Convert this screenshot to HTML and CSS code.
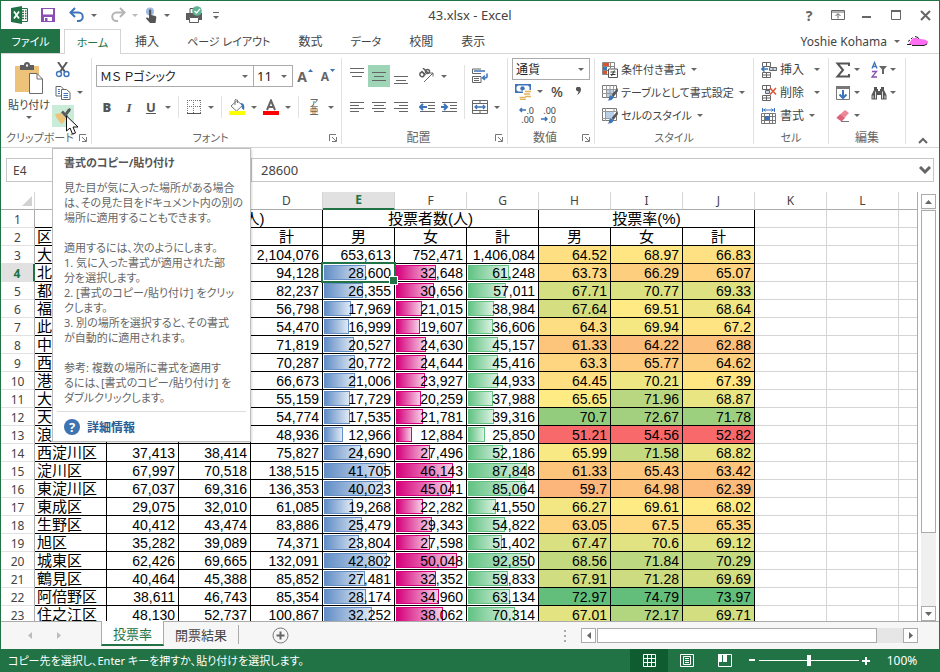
FILE: index.html
```html
<!DOCTYPE html>
<html lang="ja">
<head>
<meta charset="utf-8">
<title>43.xlsx - Excel</title>
<link rel="stylesheet" href="styles.css">
</head>
<body>
<div class="window">

<header class="titlebar">
  <div class="quick">
    <svg class="logo" width="18" height="18" viewBox="0 0 18 18"><path d="M10 2.500h6.500v13H10" fill="#fff" stroke="#217346"/><path d="M11 5h2M14 5h1.500M11 7.500h2M14 7.500h1.500M11 10h2M14 10h1.500M11 12.500h2M14 12.500h1.500" stroke="#217346" stroke-width="1.500"/><path d="M0 2 11 0v18L0 16z" fill="#217346"/><path d="m3 5.500 5 7M8 5.500l-5 7" stroke="#fff" stroke-width="1.800"/></svg>
    <button class="qa" aria-label="上書き保存"><svg width="16" height="16" viewBox="0 0 16 16"><path d="M1 1h14v14H1z" fill="#8a4fb5"/><path d="M3 2h10v5.500H3z" fill="#fff"/><path d="M4 10h8v4H4z" fill="#fff"/><path d="M5 11h2.500v3H5z" fill="#8a4fb5"/></svg></button>
    <button class="qa" aria-label="元に戻す"><svg width="16" height="16" viewBox="0 0 16 16"><path d="M2 5.500h7.500a4 4 0 0 1 0 8.500H8" fill="none" stroke="#3c73b9" stroke-width="2"/><path d="M6 1 1.500 5.500 6 10" fill="none" stroke="#3c73b9" stroke-width="2"/></svg><i class="dd"></i></button>
    <button class="qa" aria-label="やり直し"><svg width="16" height="16" viewBox="0 0 16 16"><path d="M14 5.500H6.500a4 4 0 0 0 0 8.500H8" fill="none" stroke="#b4b4b4" stroke-width="2"/><path d="m10 1 4.500 4.500L10 10" fill="none" stroke="#b4b4b4" stroke-width="2"/></svg><i class="dd pale"></i></button>
    <button class="qa touch" aria-label="タッチ/マウス モードの切り替え"><svg width="12" height="16" viewBox="1 0 12 16"><circle cx="6" cy="4.500" r="4" fill="#9dbbe0"/><path d="M5 3.500a1 1 0 0 1 2.200 0V8l4.300 1q1 .5.800 2L11.500 16H6l-4-4.500q0-1.500 1.500-1l1.500 1z" fill="#555"/></svg><i class="dd"></i></button>
    <button class="qa" aria-label="クイック印刷"><svg width="18" height="18" viewBox="0 0 18 18"><path d="M5 8V2.500h5" fill="none" stroke="#555"/><path d="M1 7h16v7h-3v-3H4v3H1z" fill="#5c5c5c"/><path d="M4.500 11.500h9v5h-9z" fill="#fff" stroke="#5c5c5c"/><circle cx="12" cy="5" r="4.800" fill="#61b293"/><path d="m9.500 5 2 2 3.500-4" fill="none" stroke="#fff" stroke-width="1.300"/></svg></button>
    <button class="qa more" aria-label="クイック アクセス ツール バーのユーザー設定"><i class="dd"></i></button>
  </div>
  <div class="doc-title">43.xlsx - Excel</div>
  <div class="sys">
    <button aria-label="ヘルプ"><b>?</b></button>
    <button aria-label="リボンの表示オプション"><svg width="14" height="12" viewBox="0 0 14 12"><path d="M.5 1.500h13v9H.5zM.5 3h13M7 9.500V5M4.500 7 7 4.500 9.500 7" fill="none" stroke="#666"/></svg></button>
    <button aria-label="最小化"><svg width="10" height="12"><path d="M0 7h9v2H0z" fill="#666"/></svg></button>
    <button aria-label="最大化"><svg width="11" height="12"><path d="M.5 1.500h9v9h-9z" fill="none" stroke="#666"/><path d="M0 1h10v2H0z" fill="#666"/></svg></button>
    <button aria-label="閉じる"><svg width="11" height="11"><path d="m1 1 9 9M10 1 1 10" stroke="#666" stroke-width="2"/></svg></button>
  </div>
</header>

<nav class="tabs">
  <button class="tab file kana">ファイル</button>
  <button class="tab home kana">ホーム</button>
  <button class="tab">挿入</button>
  <button class="tab kana">ページ レイアウト</button>
  <button class="tab">数式</button>
  <button class="tab kana">データ</button>
  <button class="tab">校閲</button>
  <button class="tab">表示</button>
  <button class="account">Yoshie Kohama<i class="dd"></i>
    <svg width="22" height="10" viewBox="0 0 22 10"><path d="M2.500 6.500 5 3q2-2 5-1l1.500 1q6-.5 9 2 2 3-3 4H4q-3 0-1.500-2.500z" fill="#ff6ef2"/><path d="M0 8.500h4M1 5.500 3 4M4 3l1.500-1.500M8 .5l3 1 1 1.500M5 9.500h12l3-1.500" fill="none" stroke="#222"/></svg></button>
</nav>

<section class="ribbon">
  <div class="group">
    <div class="body clip">
      <button class="paste kana"><svg width="28" height="32" viewBox="0 0 28 32"><path d="M0 4h24v26H0z" fill="#edc37a"/><path d="M5 3h4q0-3 3-3t3 3h4v5H5z" fill="#5f5f5f"/><path d="M11 2.500h2v2h-2z" fill="#fff"/><path d="M14.500 11.500h7.500l5.500 5.500v14.500h-13z" fill="#fff" stroke="#6b6b6b"/><path d="M22 11.500V17h5.500" fill="none" stroke="#6b6b6b"/></svg><span>貼り付け</span><i class="dd"></i></button>
      <div class="stack3">
        <div class="line"><button class="tool" aria-label="切り取り"><svg width="16" height="16" viewBox="0 0 16 16"><path d="m3 0 7 10M12 0 5 10" stroke="#5a5a5a" stroke-width="2"/><circle cx="4" cy="12" r="2.500" fill="none" stroke="#3c73b9" stroke-width="1.400"/><circle cx="11.500" cy="12" r="2.500" fill="none" stroke="#3c73b9" stroke-width="1.400"/></svg></button></div>
        <div class="line"><button class="tool" aria-label="コピー"><svg width="16" height="16" viewBox="0 0 16 16"><path d="M1 1.500h5l2 2V11H1z" fill="#fff" stroke="#666"/><path d="M6.500 4.500h5l3.500 3v7H6.500z" fill="#fff" stroke="#666"/><path d="M3 4.500h2M3 6.500h2M3 8.500h2M8.500 8.500H13M8.500 10.500H13M8.500 12.500H13" stroke="#3c73b9"/></svg></button><i class="dd"></i></div>
        <div class="line"><button class="tool hot" aria-label="書式のコピー/貼り付け"><svg width="16" height="16" viewBox="0 0 16 16"><path d="m0 6 6-1 5 6-4 5q-2-1-3-3Q1 10 0 6z" fill="#edc37a"/><path d="m6 4.500 2-2 5 5.500-2 2z" fill="#5c5c5c"/><path d="m9.500 6 3-4.500 2-1.500 1.500 1.500-1 2L12 7z" fill="#5c5c5c"/></svg></button></div>
      </div>
    </div>
    <div class="caption kana"><span>クリップボード</span><button class="launch" aria-label="クリップボードの設定"><svg width="8" height="8"><path d="M.5 7V.5H7M3 3l4 4M7.500 3v4.500H3" fill="none" stroke="#777"/></svg></button></div>
  </div>

  <div class="group">
    <div class="body two">
      <div class="line combos">
        <label class="combo face"><select aria-label="フォント"><option>ＭＳ Ｐゴシック</option></select><i class="dd"></i></label>
        <label class="combo size"><select aria-label="フォント サイズ"><option>11</option></select><i class="dd"></i></label>
        <button class="tool letter grow" aria-label="フォント サイズの拡大">A<svg width="5" height="3"><path d="M0 3 2.500 0 5 3z" fill="#3c73b9"/></svg></button>
        <button class="tool letter" aria-label="フォント サイズの縮小">A<svg width="5" height="3"><path d="M0 0 2.500 3 5 0z" fill="#3c73b9"/></svg></button>
      </div>
      <div class="line">
        <button class="tool glyph"><b>B</b></button><button class="tool glyph ital"><i>I</i></button><button class="tool glyph"><u>U</u></button><i class="dd"></i>
        <span class="sep"></span>
        <button class="tool" aria-label="罫線"><svg width="14" height="14"><path d="M.5 0v13M6.500 0v13M13.500 0v13M0 .5h14M0 6.500h14" fill="none" stroke="#777" stroke-dasharray="1 1"/><path d="M0 13.500h14" stroke="#555"/></svg></button><i class="dd"></i>
        <span class="sep"></span>
        <button class="tool" aria-label="塗りつぶしの色"><svg width="16" height="16" viewBox="0 0 16 16"><path d="m8 1.500 5.500 5L7.500 12 2 7z" fill="#fff" stroke="#777"/><path d="M6 6V1q1.500-2 2.500 0v3" fill="none" stroke="#777"/><path d="M11.500 4q5 0 3.500 7-3-1-2-4z" fill="#3c73b9"/><path d="M0 12h16v4H0z" fill="#ff0"/></svg></button><i class="dd"></i>
        <button class="tool" aria-label="フォントの色"><svg width="16" height="16" viewBox="0 0 16 16"><path d="M4 11 8 1.500 12 11M5.500 8h5" fill="none" stroke="#666" stroke-width="2"/><path d="M0 12h16v4H0z" fill="#f00"/></svg></button><i class="dd"></i>
        <span class="sep"></span>
        <button class="tool ruby" aria-label="ふりがなの表示/非表示"><span>ア</span><span>亜</span></button><i class="dd"></i>
      </div>
    </div>
    <div class="caption kana"><span>フォント</span><button class="launch" aria-label="フォントの設定"><svg width="8" height="8"><path d="M.5 7V.5H7M3 3l4 4M7.500 3v4.500H3" fill="none" stroke="#777"/></svg></button></div>
  </div>

  <div class="group">
    <div class="body align">
      <div class="two">
        <div class="line">
          <button class="tool" aria-label="上揃え"><svg width="14" height="16"><path d="M0 4.500h14M2 8.500h10M0 .5h14" stroke="#666"/></svg></button><button class="tool on" aria-label="上下中央揃え"><svg width="14" height="16"><path d="M0 4.500h14M2 8.500h10M0 12.500h14" stroke="#666"/></svg></button><button class="tool" aria-label="下揃え"><svg width="14" height="16"><path d="M0 8.500h14M2 12.500h10M0 15.500h14" stroke="#666"/></svg></button>
          <button class="tool gapped" aria-label="方向"><svg width="18" height="16" viewBox="0 0 18 16"><g fill="none" stroke="#5e5e5e" stroke-width="1.500"><ellipse cx="4" cy="6.500" rx="2" ry="2.300" transform="rotate(-45 4 6.500)"/><path d="m3.500 3 4 4"/><path d="m5 0 5.500 5.500"/><ellipse cx="9.500" cy="3.500" rx="2" ry="2" /></g><path d="m6 14 9-9M11.500 5H15v3.500" fill="none" stroke="#666"/></svg></button><i class="dd"></i>
        </div>
        <div class="line">
          <button class="tool" aria-label="左揃え"><svg width="14" height="12"><path d="M0 1.500h14M0 4.500h9M0 7.500h14M0 10.500h9" stroke="#666"/></svg></button><button class="tool" aria-label="中央揃え"><svg width="14" height="12"><path d="M0 1.500h14M2 4.500h10M0 7.500h14M2 10.500h10" stroke="#666"/></svg></button><button class="tool" aria-label="右揃え"><svg width="14" height="12"><path d="M0 1.500h14M5 4.500h9M0 7.500h14M5 10.500h9" stroke="#666"/></svg></button>
          <button class="tool gapped" aria-label="インデントを減らす"><svg width="16" height="12"><path d="M1 1.500h15M9 4.500h7M9 7.500h7M1 10.500h15" stroke="#666"/><path d="M1 6h7M4 3 1 6l3 3" fill="none" stroke="#3c73b9" stroke-width="2"/></svg></button><button class="tool" aria-label="インデントを増やす"><svg width="16" height="12"><path d="M1 1.500h15M9 4.500h7M9 7.500h7M1 10.500h15" stroke="#666"/><path d="M0 6h6M3 3l3 3-3 3" fill="none" stroke="#3c73b9" stroke-width="2"/></svg></button>
        </div>
      </div>
      <span class="sep tall"></span>
      <div class="two">
        <div class="line"><button class="tool" aria-label="折り返して全体を表示する"><svg width="16" height="16" viewBox="0 0 16 16"><path d="M.5 1v4.500h8.500M.5 1h8.500M.5 8.500h8.500v6H.5zM2 10.500h5M2 12.500h5" fill="none" stroke="#666"/><path d="M2 3h11M15 5.500v3q0 1.500-2 1.500h-2M13 7.500 10.500 10l2.500 2" fill="none" stroke="#3c73b9" stroke-width="1.500"/></svg></button></div>
        <div class="line"><button class="tool" aria-label="セルを結合して中央揃え"><svg width="16" height="14" viewBox="0 0 16 14"><path d="M.5.500h15v13H.5zM.5 3.500h15M.5 10.500h15M8 0v3.500M8 10.500V14" fill="none" stroke="#666"/><path d="M3 7h10M5 5 3 7l2 2M11 5l2 2-2 2" fill="none" stroke="#3c73b9" stroke-width="1.300"/></svg></button><i class="dd"></i></div>
      </div>
    </div>
    <div class="caption"><span>配置</span><button class="launch" aria-label="配置の設定"><svg width="8" height="8"><path d="M.5 7V.5H7M3 3l4 4M7.500 3v4.500H3" fill="none" stroke="#777"/></svg></button></div>
  </div>

  <div class="group">
    <div class="body number">
      <label class="combo"><select aria-label="数値の書式"><option>通貨</option></select><i class="dd"></i></label>
      <div class="line">
        <button class="tool" aria-label="通貨表示形式"><svg width="16" height="16" viewBox="0 0 16 16"><path d="M0 0h16v9H0z" fill="#3c73b9"/><path d="M3 1.500h10L14.500 3v3L13 7.500H3L1.500 6V3z" fill="#fff"/><circle cx="7.500" cy="4.500" r="2.200" fill="#3c73b9"/><path d="M8 6h8v10H4v-4h4z" fill="#fff"/><path d="M10 7.500h6M9 10h6M10 12.500h6M4.500 13.500h6M5 15.500h6" stroke="#e4b25c" stroke-width="1.700"/></svg></button><i class="dd"></i>
        <button class="tool sign">%</button><button class="tool" aria-label="桁区切りスタイル"><svg width="6" height="9"><path d="M1 0h3l1 2q0 4-4 6 1.500-2 1.500-3.500L1 4 0 3V1z" fill="#555"/></svg></button>
      </div>
      <div class="line">
        <button class="tool dec" aria-label="小数点以下の表示桁数を増やす"><span><svg width="7" height="6"><path d="M1 3h6M3 1 1 3l2 2" fill="none" stroke="#3c73b9" stroke-width="1.500"/></svg>.0</span><span>.00</span></button><button class="tool dec" aria-label="小数点以下の表示桁数を減らす"><span>.00</span><span><svg width="7" height="6"><path d="M0 3h6M4 1l2 2-2 2" fill="none" stroke="#3c73b9" stroke-width="1.500"/></svg>.0</span></button>
      </div>
    </div>
    <div class="caption"><span>数値</span><button class="launch" aria-label="数値の設定"><svg width="8" height="8"><path d="M.5 7V.5H7M3 3l4 4M7.500 3v4.500H3" fill="none" stroke="#777"/></svg></button></div>
  </div>

  <div class="group">
    <div class="body list kana">
      <button class="cmd"><svg width="16" height="16" viewBox="0 0 16 16"><path d="M.5.500h12v12H.5zM4.500 0v13M0 4.500h13M0 8.500h13M8.500 0v6" fill="#fff" stroke="#888"/><path d="M1 1h6v3H1zM1 9h4v3H1z" fill="#d9532c"/><path d="M1 5h4v3H1z" fill="#3c73b9"/><path d="M6.500 7h9v8.500h-9z" fill="#fff" stroke="#555"/><path d="M8.500 10h5M8.500 12.500h5M12.500 8.500l-3 5.500" stroke="#333"/></svg><span>条件付き書式</span><i class="dd"></i></button>
      <button class="cmd"><svg width="16" height="16" viewBox="0 0 16 16"><path d="M.5.500h14v12H.5z" fill="#fff" stroke="#777"/><path d="M4 4h8v8H4z" fill="#b9cfe9"/><path d="M4.500 0v13M8 0v13M11.500 0v8M0 4.500h15M0 8.500h12" stroke="#999"/><path d="m15.500 3-6 7 2 2 4.500-6z" fill="#555"/><path d="M9 10.500q2 0 2.500 2-1 3.500-6 3 2-1 1.500-3 .5-2 2-2z" fill="#3c73b9"/></svg><span>テーブルとして書式設定</span><i class="dd"></i></button>
      <button class="cmd"><svg width="16" height="16" viewBox="0 0 16 16"><path d="M.5.500h14v12H.5z" fill="#fff" stroke="#777"/><path d="M4 4h8v6H4z" fill="#b9cfe9"/><path d="M3.500 0v13M12 0v4M0 3.500h15M0 10.500h9" stroke="#999"/><path d="m15.500 3-6 7 2 2 4.500-6z" fill="#555"/><path d="M9 10.500q2 0 2.500 2-1 3.500-6 3 2-1 1.500-3 .5-2 2-2z" fill="#3c73b9"/></svg><span>セルのスタイル</span><i class="dd"></i></button>
    </div>
    <div class="caption kana"><span>スタイル</span></div>
  </div>

  <div class="group">
    <div class="body list">
      <button class="cmd"><svg width="16" height="16" viewBox="0 0 16 16"><path d="M1.500.500h8v4h-8zM5.500.500v4M1.500 10.500h8v5h-8zM5.500 10.500v5M1.500 13h8" fill="none" stroke="#666"/><path d="M8.500 5.500h7v3h-7zM12 5.500v3" fill="#c5d7ee" stroke="#666"/><path d="M1 7h6M3.500 4.500 1 7l2.500 2.500" fill="none" stroke="#3c73b9" stroke-width="1.600"/></svg><span>挿入</span><i class="dd wide"></i></button>
      <button class="cmd"><svg width="16" height="16" viewBox="0 0 16 16"><path d="M1.500.500h8v4h-8zM5.500.500v4M1.500 10.500h8v5h-8zM5.500 10.500v5M1.500 13h8" fill="none" stroke="#666"/><path d="M4.500 5.500h4v3h-4z" fill="#c5d7ee" stroke="#666"/><path d="m9 3 6 6.500M15 3 9 9.500" stroke="#e0573a" stroke-width="1.600"/></svg><span>削除</span><i class="dd wide"></i></button>
      <button class="cmd"><svg width="16" height="16" viewBox="0 0 16 16"><path d="M1.500 0v4M13.500 0v4M2 2h11M4.500.500 3 2l1.500 1.500M10.500.500 12 2l-1.500 1.500" fill="none" stroke="#3c73b9"/><path d="M.5 5.500h14v10H.5zM3.500 5v10M8.500 5v10M11.500 5v10M.5 8.500h14M.5 12.500h14" fill="none" stroke="#777"/><path d="M4 8h5v4H4z" fill="#3c73b9"/></svg><span>書式</span><i class="dd"></i></button>
    </div>
    <div class="caption kana"><span>セル</span></div>
  </div>

  <div class="group">
    <div class="body edit">
      <button class="cmd" aria-label="合計"><svg width="16" height="16" viewBox="0 0 16 16"><path d="M14 4V1.500H2.500L8 8l-5.500 6.500H14V12" fill="none" stroke="#555" stroke-width="2"/></svg><i class="dd"></i></button>
      <button class="cmd" aria-label="並べ替えとフィルター"><svg width="16" height="18" viewBox="0 0 16 18"><path d="M1 7.500 3.500 1.500 6 7.500M2 5.500h3" fill="none" stroke="#3c73b9" stroke-width="1.300"/><path d="M1 10.500h4.500L1 16h5" fill="none" stroke="#8a4fb5" stroke-width="1.300"/><path d="M8 5h8l-3 3.500V13h-2V8.500z" fill="#666"/></svg><i class="dd"></i></button>
      <button class="cmd" aria-label="フィル"><svg width="16" height="16" viewBox="0 0 16 16"><path d="M1.500 2.500h13v12h-13z" fill="#fff" stroke="#777"/><path d="M1 1h14v3H1z" fill="#777"/><path d="M8 5v8M4.500 9.500 8 13l3.500-3.500" fill="none" stroke="#3c73b9" stroke-width="2"/></svg><i class="dd"></i></button>
      <button class="cmd" aria-label="検索と選択"><svg width="16" height="16" viewBox="0 0 16 16"><path d="M3 2h3v2h1v2h2V4h1V2h3v3l2.500 5v4.500H10V10H6v4.500H.5V10L3 5z" fill="#555"/><path d="M2 10.500v3M4.500 6.500v7M11.500 6.500v7M14 10.500v3" stroke="#ddd"/></svg><i class="dd"></i></button>
      <button class="cmd" aria-label="クリア"><svg width="16" height="16" viewBox="0 0 16 16"><path d="m10 2 4 3-7.500 8-5-3.500z" fill="#ec8798"/><path d="m5 6.500 5 3.500-3.500 3.500-5-3.500z" fill="#e0627a"/><path d="M6 13.500h8" stroke="#777"/></svg><i class="dd"></i></button>
    </div>
    <div class="caption"><span>編集</span></div>
  </div>

  <button class="collapse" aria-label="リボンを折りたたむ"><svg width="10" height="7"><path d="m1 6 4-4 4 4" fill="none" stroke="#666" stroke-width="2"/></svg></button>
</section>

<section class="formula-bar">
  <input class="name-box" aria-label="名前ボックス" value="E4">
  <div class="formula"><input aria-label="数式バー" value="28600"><button aria-label="数式バーの展開"><svg width="12" height="9"><path d="m1 1 5 5 5-5" fill="none" stroke="#666" stroke-width="3"/></svg></button></div>
</section>

<main class="sheet">
  <div class="cells">
    <table>
      <colgroup><col class="c-head"><col span="12" class="c-data"><col></colgroup>
      <thead><tr><th class="corner"><svg width="10" height="10"><path d="M10 0v10H0z" fill="#d2d2d2"/></svg></th><th>A</th><th>B</th><th>C</th><th>D</th><th class="current">E</th><th>F</th><th>G</th><th>H</th><th>I</th><th>J</th><th>K</th><th>L</th><th></th></tr></thead>
      <tbody id="rows"></tbody>
    </table>
  </div>
  <div class="vscroll">
    <button aria-label="上へスクロール"><svg width="7" height="4"><path d="M0 4 3.500 0 7 4z" fill="#666"/></svg></button>
    <span class="thumb"></span><span class="track"></span>
    <button aria-label="下へスクロール"><svg width="7" height="4"><path d="m0 0 3.500 4L7 0z" fill="#666"/></svg></button>
  </div>
</main>

<section class="sheet-bar">
  <div class="sheet-nav"><svg width="4" height="7"><path d="M4 0v7L0 3.500z" fill="#bbb"/></svg><svg width="4" height="7"><path d="M0 0v7l4-3.500z" fill="#bbb"/></svg></div>
  <button class="sheet-tab active">投票率</button>
  <button class="sheet-tab">開票結果</button>
  <button class="add" aria-label="新しいシート"><svg width="17" height="17"><circle cx="8.500" cy="8.500" r="7.500" fill="none" stroke="#777"/><path d="M8.500 4.500v8M4.500 8.500h8" stroke="#666" stroke-width="2"/></svg></button>
  <div class="hscroll">
    <svg class="grip" width="2" height="12"><path d="M0 1h2M0 6h2M0 11h2" stroke="#aaa" stroke-width="2"/></svg>
    <button aria-label="左へスクロール"><svg width="4" height="7"><path d="M4 0v7L0 3.500z" fill="#666"/></svg></button>
    <span class="thumb"></span><span class="track"></span>
    <button aria-label="右へスクロール"><svg width="4" height="7"><path d="M0 0v7l4-3.500z" fill="#666"/></svg></button>
  </div>
</section>

<footer class="status">
  <span class="message kana">コピー先を選択し、Enter キーを押すか、貼り付けを選択します。</span>
  <button class="view on" aria-label="標準"><svg width="13" height="13"><path d="M.5.500h12v12H.5zM4.500 0v13M8.500 0v13M0 4.500h13M0 8.500h13" fill="none" stroke="#fff"/></svg></button>
  <button class="view" aria-label="ページ レイアウト"><svg width="14" height="13"><path d="M.5.500h13v12H.5zM3.500 2.500h7v8h-7zM5 4.500h4M5 6.500h4M5 8.500h4" fill="none" stroke="#fff"/></svg></button>
  <button class="view" aria-label="改ページ プレビュー"><svg width="14" height="13"><path d="M.5.500h13v12H.5z" fill="none" stroke="#fff"/><path d="M0 0h4v8H0zM5 0h4v8H5z" fill="#fff"/></svg></button>
  <button class="zoom" aria-label="縮小"><svg width="7" height="7"><path d="M0 3h6" stroke="#fff" stroke-width="2"/></svg></button>
  <input type="range" aria-label="ズーム" min="0" max="200" value="100">
  <button class="zoom" aria-label="拡大"><svg width="8" height="8"><path d="M0 4h8M4 0v8" stroke="#fff" stroke-width="2"/></svg></button>
  <button class="percent">100%</button>
</footer>

<aside class="tip kana">
  <h2>書式のコピー/貼り付け</h2>
  <p>見た目が気に入った場所がある場合<br>は、その見た目をドキュメント内の別の<br>場所に適用することもできます。</p>
  <p>適用するには、次のようにします。<br>1. 気に入った書式が適用された部<br>分を選択します。<br>2. [書式のコピー/貼り付け] をクリッ<br>クします。<br>3. 別の場所を選択すると、その書式<br>が自動的に適用されます。</p>
  <p>参考: 複数の場所に書式を適用す<br>るには、[書式のコピー/貼り付け] を<br>ダブルクリックします。</p>
  <a href="#"><span class="mark">?</span>詳細情報</a>
</aside>
<svg class="pointer" width="13" height="20" viewBox="0 0 13 20"><path d="M.5 1v15l3.500-3 2.500 6 3-1-2.500-6h5z" fill="#fff" stroke="#111"/></svg>
</div>
<script src="app.js"></script>
</body>
</html>
```
FILE: styles.css
```css
* { box-sizing: border-box; }

body {
  margin: 0;
  font: 12px/15px "Noto Sans", "Noto Sans CJK JP", sans-serif;
  font-feature-settings: "palt";
  color: #444;
}

button, input, select {
  margin: 0;
  padding: 0;
  border: 0;
  border-radius: 0;
  background: none;
  font: inherit;
  font-feature-settings: inherit;
  color: inherit;
  outline: 0;
}

/* kana-heavy labels are set one step smaller */
.kana { font-size: 11px; }

svg { display: block; flex: none; }

.window {
  position: relative;
  display: flex;
  flex-direction: column;
  height: 100vh;
  border: 1px solid #217346;
  border-bottom: 0;
  background: #fff;
  overflow: hidden;
  white-space: nowrap;
}

.dd {
  display: grid;
  place-items: center;
  flex: none;
  width: 12px;
}
.dd::after {
  content: "";
  border: 3px solid transparent;
  border-top-color: #666;
  border-bottom: 0;
}
.dd.pale::after { border-top-color: #bbb; }

/* title bar */
.titlebar {
  flex: none;
  display: grid;
  grid-template-columns: 1fr auto 1fr;
  align-items: center;
  height: 28px;
}
.quick { display: flex; align-items: center; padding-left: 10px; }
.logo { margin-right: 11px; }
.qa { display: flex; align-items: center; gap: 3px; margin-right: 10px; }
.qa:nth-of-type(1) { margin-right: 13px; }
.qa.touch { margin-right: 12px; margin-left: -6px; gap: 4px; }
.qa.more .dd { border-top: 1px solid #666; width: 6px; padding-top: 3px; }
.doc-title { font-size: 13px; }
.sys { display: flex; align-items: center; justify-content: flex-end; padding-right: 3px; }
.sys button { display: grid; place-items: center; width: 22px; margin-left: 7px; }
.sys b { font-size: 14px; color: #666; }

/* ribbon tabs */
.tabs {
  flex: none;
  display: flex;
  height: 25px;
  border-bottom: 1px solid #d4d4d4;
}
.tab { padding: 0 14px; }
.tab.file { min-width: 59px; margin-right: 4px; padding: 0 8px; background: #217346; color: #fff; }
.tab.home {
  min-width: 57px;
  padding: 0 8px;
  margin-bottom: -1px;
  border: 1px solid #d4d4d4;
  border-bottom: 0;
  background: #fff;
  color: #217346;
}
.account { display: flex; align-items: center; gap: 4px; margin-left: auto; padding-right: 10px; }

/* ribbon */
.ribbon {
  flex: none;
  display: grid;
  grid-template-columns: 91px 250px 166px 87px 159px 75px 77px 1fr;
  height: 94px;
  padding: 4px 0 3px;
  border-bottom: 1px solid #d4d4d4;
}
.group { display: flex; flex-direction: column; border-right: 1px solid #e1e1e1; }
.body { flex: 1; }
.line { display: flex; align-items: center; }
.tool { display: grid; place-items: center; flex: none; width: 22px; height: 22px; }
.tool.hot { background: #c9ecd8; }
.tool.on { background: #9fd5b7; }
.gapped { margin-left: 4px; }
.sep { width: 1px; height: 22px; margin: 0 4px; background: #e1e1e1; }
.caption { display: flex; align-items: center; height: 12px; line-height: 12px; color: #666; }
.caption span { flex: 1; text-align: center; }
.launch { margin-right: 4px; }

.clip { display: flex; padding-left: 5px; }
.paste { display: flex; flex-direction: column; align-items: center; gap: 3px; width: 46px; padding-top: 4px; }
.paste .dd { margin-top: 1px; }
.stack3 .line { height: 23px; }

.two { display: flex; flex-direction: column; gap: 9px; }
.body.two, .align { padding: 7px 0 0 4px; }
.combos .tool { margin-left: 1px; }
.combo {
  display: flex;
  height: 22px;
  border: 1px solid #ababab;
  padding: 0 2px 0 3px;
  background: #fff;
  color: #222;
}
.combo select { flex: 1; min-width: 0; appearance: none; }
.combo.face { width: 158px; }
.combo.size { width: 40px; margin-left: -1px; font-size: 13px; }
.tool.letter { display: flex; align-items: center; justify-content: center; gap: 1px; font: bold 12px "Noto Sans", sans-serif; color: #666; }
.tool.grow { font-size: 14px; }
.tool.letter svg { align-self: flex-start; margin-top: 4px; }
.tool.glyph { font-size: 13px; font-weight: bold; color: #555; }
.tool.ital { font-family: "Liberation Serif", serif; }
.ruby { font-size: 9px; line-height: 8px; align-content: center; }
.align { display: flex; }
.tall { height: 54px; }

.number { padding: 0 4px; }
.number .line { height: 23px; }
.number .combo { height: 22px; }
.sign { font-size: 14px; font-weight: 500; }
.dec { font-size: 9px; line-height: 9px; align-content: center; justify-items: end; }
.dec span { display: flex; align-items: center; }

.list { padding-left: 7px; }
.cmd { display: flex; align-items: center; height: 23px; }
.cmd span { margin: 0 2px 0 3px; }
.cmd .wide { margin-left: 5px; }
.edit { display: grid; grid-template: repeat(3, 23px) / 36px 36px; padding-left: 6px; }
.collapse { align-self: end; justify-self: center; }

/* formula bar */
.formula-bar { flex: none; display: flex; justify-content: space-between; padding: 10px 5px; }
.name-box { width: 120px; height: 24px; padding-left: 6px; border: 1px solid #c6c6c6; }
.formula { display: flex; flex: 1; height: 24px; margin-left: 125px; border: 1px solid #c6c6c6; padding: 0 2px 0 9px; font-size: 13px; }
.formula input { flex: 1; min-width: 0; }

/* worksheet */
.sheet { flex: 1; min-height: 0; display: flex; }
.cells { flex: 1; min-width: 0; overflow: hidden; border-right: 1px solid #ababab; }
table { width: 100%; table-layout: fixed; border-collapse: separate; border-spacing: 0; }
.c-head { width: 34px; }
.c-data { width: 72px; }
th, td { height: 18px; padding: 0; }
thead th {
  border-bottom: 1px solid #ababab;
  border-right: 1px solid #d4d4d4;
  font-weight: normal;
  font-size: 12px;
  line-height: 16px;
}
thead .current { border-bottom: 2px solid #217346; background: #e1e1e1; color: #217346; font-weight: bold; }
.corner svg { margin: 0 2px 0 auto; }
thead th:last-child, td:last-child { border-right: 0; }
tbody th { border-right: 1px solid #ababab; border-bottom: 1px solid #e1e1e1; font-weight: normal; line-height: 15px; padding-top: 2px; }
tbody th.current { border-right: 2px solid #217346; background: #e1e1e1; color: #217346; font-weight: bold; }
td {
  border-right: 1px solid #d4d4d4;
  border-bottom: 1px solid #d4d4d4;
  font: 14px/15px "Liberation Sans", sans-serif;
  color: #000;
}
td.ink { border-color: #000; }
td.num { text-align: right; padding: 2px 3px 0 0; }
td.text { font: 15px/17px "Liberation Sans", "Noto Sans CJK JP", sans-serif; padding-left: 2px; }
td.center { text-align: center; padding: 0; }
td.bar { padding: 0; }
.meter { display: grid; height: 17px; }
.meter > * { grid-area: 1 / 1; }
.meter span { text-align: right; padding: 2px 3px 0 0; }
.meter i { margin: 1px; height: 15px; border: 1px solid; }
.meter .blue { border-color: #638ec6; background: linear-gradient(90deg, #638ec6, #dfe9f5); }
.meter .pink { border-color: #d6007b; background: linear-gradient(90deg, #d6007b, #f6d0e6); }
.meter .green { border-color: #63c384; background: linear-gradient(90deg, #63c384, #dcf2e3); }
td.selected { position: relative; }
td.selected::before { content: ""; position: absolute; inset: -2px; border: 2px solid #217346; }
td.selected::after { content: ""; position: absolute; right: -4px; bottom: -4px; width: 7px; height: 7px; border: 1px solid #fff; background: #217346; }

.vscroll { display: flex; flex-direction: column; flex: none; width: 15px; margin: 2px 3px 0 3px; background: #f0f0f0; }
.vscroll button, .hscroll button { display: grid; place-items: center; flex: none; width: 15px; height: 15px; border: 1px solid #ababab; background: #fff; }
.thumb { border: 1px solid #ababab; background: #fff; }
.vscroll .thumb { flex: 323; margin-top: 1px; }
.vscroll .track { flex: 74; }

/* sheet tabs */
.sheet-bar { flex: none; display: flex; height: 28px; border-top: 1px solid #ababab; background: #f6f6f6; }
.sheet-nav { display: flex; align-items: center; gap: 25px; width: 100px; padding-left: 27px; }
.sheet-tab { margin: 3px 0 5px; padding: 1px 11px 0; border-right: 1px solid #ababab; font-size: 13px; }
.sheet-tab.active { margin: -1px 0 3px; padding-top: 4px; border: 1px solid #ababab; border-top: 0; border-bottom: 2px solid #217346; background: #fff; color: #217346; }
.add { padding-left: 33px; }
.hscroll { display: flex; align-items: center; flex: 0 1 354px; margin: 0 21px 0 auto; }
.grip { margin-right: 15px; }
.hscroll .thumb { flex: 281; height: 15px; margin-left: 1px; }
.hscroll .track { flex: 26; height: 15px; background: #e6e6e6; }

/* status bar */
.status { flex: none; display: flex; align-items: center; height: 23px; background: #217346; color: #fff; }
.message { margin: 0 auto 0 7px; }
.view { display: grid; place-items: center; width: 38px; height: 23px; }
.view.on { background: #0e5c2f; }
.zoom { padding: 0 3px; }
.view + .zoom { margin-left: 2px; }
.status input { appearance: none; width: 100px; height: 12px; background: linear-gradient(#fff, #fff) center / 100% 1px no-repeat; }
.status input::-webkit-slider-thumb { appearance: none; width: 4px; height: 11px; background: #fff; }
.percent { width: 66px; padding-right: 8px; text-align: center; }

/* screen tip */
.tip {
  position: absolute;
  left: 51px;
  top: 147px;
  width: 199px;
  padding: 6px 4px;
  border: 1px solid #bebebe;
  background: #fff;
  box-shadow: 1px 1px 2px rgba(0, 0, 0, .15);
  color: #666;
}
.tip h2, .tip p { margin: 0 0 15px; padding-left: 7px; font-size: 11px; line-height: 15px; }
.tip h2 { margin-bottom: 10px; color: #555; }
.tip p:last-of-type { margin-bottom: 6px; }
.tip a { display: flex; align-items: center; gap: 7px; padding: 7px 7px 0; border-top: 1px solid #ddd; color: #2b5c94; font-size: 12px; font-weight: bold; text-decoration: none; }
.mark { width: 16px; height: 16px; border-radius: 8px; background: #3c73b0; color: #fff; text-align: center; line-height: 16px; font-size: 13px; }
.pointer { position: absolute; left: 65px; top: 114px; }
```
FILE: app.js
```js
// name, men, women, total, votes (men, women, total), turnout (men, women, total)
const wards = [
  "大阪市|||2,104,076|653,613|752,471|1,406,084|64.52|68.97|66.83",
  "北区|||94,128|28,600|32,648|61,248|63.73|66.29|65.07",
  "都島区|||82,237|26,355|30,656|57,011|67.71|70.77|69.33",
  "福島区|||56,798|17,969|21,015|38,984|67.64|69.51|68.64",
  "此花区|||54,470|16,999|19,607|36,606|64.3|69.94|67.2",
  "中央区|||71,819|20,527|24,630|45,157|61.33|64.22|62.88",
  "西区|||70,287|20,772|24,644|45,416|63.3|65.77|64.62",
  "港区|||66,673|21,006|23,927|44,933|64.45|70.21|67.39",
  "大正区|||55,159|17,729|20,259|37,988|65.65|71.96|68.87",
  "天王寺区|||54,774|17,535|21,781|39,316|70.7|72.67|71.78",
  "浪速区|||48,936|12,966|12,884|25,850|51.21|54.56|52.82",
  "西淀川区|37,413|38,414|75,827|24,690|27,496|52,186|65.99|71.58|68.82",
  "淀川区|67,997|70,518|138,515|41,705|46,143|87,848|61.33|65.43|63.42",
  "東淀川区|67,037|69,316|136,353|40,023|45,041|85,064|59.7|64.98|62.39",
  "東成区|29,075|32,010|61,085|19,268|22,282|41,550|66.27|69.61|68.02",
  "生野区|40,412|43,474|83,886|25,479|29,343|54,822|63.05|67.5|65.35",
  "旭区|35,282|39,089|74,371|23,804|27,598|51,402|67.47|70.6|69.12",
  "城東区|62,426|69,665|132,091|42,802|50,048|92,850|68.56|71.84|70.29",
  "鶴見区|40,464|45,388|85,852|27,481|32,352|59,833|67.91|71.28|69.69",
  "阿倍野区|38,611|46,743|85,354|28,174|34,960|63,134|72.97|74.79|73.97",
  "住之江区|48,130|52,737|100,867|32,252|38,062|70,314|67.01|72.17|69.71"
].map(line => line.split("|"));

const bars = { 4: ["blue", 0.00148], 5: ["pink", 0.001226], 6: ["green", 0.00067] };
const scales = { 7: [51.21, 65.7, 72.97], 8: [54.56, 69.6, 74.79], 9: [52.82, 68.02, 73.97] };
const red = [248, 105, 107], yellow = [255, 235, 132], green = [99, 190, 123];

function heat(value, [low, mid, high]) {
  const [from, to, t] = value < mid
    ? [red, yellow, (value - low) / (mid - low)]
    : [yellow, green, (value - mid) / (high - mid)];
  return `rgb(${from.map((c, i) => Math.round(c + (to[i] - c) * t)).join(",")})`;
}

function cell(text, col, ward) {
  if (col === 0) return `<td class="ink text">${text}</td>`;
  if (bars[col] && ward > 0) {
    const [tone, scale] = bars[col];
    const width = Math.round(Number(text.replace(",", "")) * scale);
    const picked = ward === 1 && col === 4 ? " selected" : "";
    return `<td class="ink bar${picked}"><div class="meter"><i class="${tone}" style="width:${width}px"></i><span>${text}</span></div></td>`;
  }
  const fill = scales[col] ? ` style="background:${heat(Number(text), scales[col])}"` : "";
  return `<td class="ink num"${fill}>${text}</td>`;
}

const blank = "<td></td><td></td><td></td>";
const title = text => `<td class="ink text center" colspan="3">${text}</td>`;
const sub = ["男", "女", "計"].map(t => `<td class="ink text center">${t}</td>`).join("");

document.getElementById("rows").innerHTML =
  `<tr><th>1</th><td class="ink"></td>${title("有権者総数(人)")}${title("投票者数(人)")}${title("投票率(%)")}${blank}</tr>` +
  `<tr><th>2</th><td class="ink text">区名</td>${sub}${sub}${sub}${blank}</tr>` +
  wards.map((ward, i) =>
    `<tr><th${i === 1 ? ' class="current"' : ""}>${i + 3}</th>${ward.map((t, c) => cell(t, c, i)).join("")}${blank}</tr>`
  ).join("");
```
